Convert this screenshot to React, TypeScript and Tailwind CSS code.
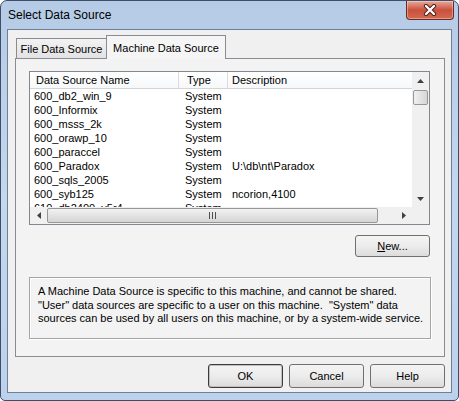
import React from "react";

const rows = [
  { name: "600_db2_win_9", type: "System", desc: "" },
  { name: "600_Informix", type: "System", desc: "" },
  { name: "600_msss_2k", type: "System", desc: "" },
  { name: "600_orawp_10", type: "System", desc: "" },
  { name: "600_paraccel", type: "System", desc: "" },
  { name: "600_Paradox", type: "System", desc: "U:\\db\\nt\\Paradox" },
  { name: "600_sqls_2005", type: "System", desc: "" },
  { name: "600_syb125", type: "System", desc: "ncorion,4100" },
  { name: "610_db2400_v5r4", type: "System", desc: "" },
];

function Arrow({ dir }: { dir: "up" | "down" | "left" | "right" }) {
  const pts = {
    up: "0,4 3.5,0 7,4",
    down: "0,0 3.5,4 7,0",
    left: "4,0 0,3.5 4,7",
    right: "0,0 4,3.5 0,7",
  }[dir];
  const vertical = dir === "up" || dir === "down";
  return (
    <svg width={vertical ? 7 : 4} height={vertical ? 4 : 7} viewBox={vertical ? "0 0 7 4" : "0 0 4 7"}>
      <polygon points={pts} fill="#404040" />
    </svg>
  );
}

function WinButton({ children, primary }: { children: React.ReactNode; primary?: boolean }) {
  return (
    <div
      className={`flex h-full w-[75px] items-center justify-center rounded-[3px] border bg-gradient-to-b from-[#f4f4f4] via-[#ececec] to-[#dcdcdc] text-[11px] text-black ${
        primary ? "border-[#3c3c3c] shadow-[inset_0_0_0_1px_#bfbfbf]" : "border-[#707070]"
      }`}
    >
      {children}
    </div>
  );
}

export default function App() {
  return (
    <div
      className="relative h-[401px] w-[459px] overflow-hidden rounded-t-[7px] rounded-b-[5px] border border-[#3d4e66] bg-gradient-to-b from-[#b5cbe6] via-[#c3d7ee] to-[#bcd2ec]"
      style={{ fontFamily: '"Liberation Sans", Arial, sans-serif' }}
    >
      {/* title bar */}
      <div className="flex h-[28px] items-start justify-between">
        <span className="ml-[7px] mt-[7px] text-[12px] leading-[14px] text-black">Select Data Source</span>
        <div className="mr-[4px] flex h-[19px] w-[48px] items-center justify-center rounded-b-[4px] border border-t-0 border-[#6b2b24] bg-gradient-to-b from-[#e8a899] via-[#c9503d] to-[#d36a4f] shadow-[inset_0_0_0_1px_rgba(255,255,255,0.35)]">
          <svg width="14" height="12" viewBox="0 0 14 12">
            <path d="M3 2 L11 10 M11 2 L3 10" stroke="#4a1b14" strokeWidth="4.2" strokeLinecap="round" />
            <path d="M3 2 L11 10 M11 2 L3 10" stroke="#ffffff" strokeWidth="2.4" strokeLinecap="round" />
          </svg>
        </div>
      </div>

      {/* client area */}
      <div className="mx-[6px] h-[364px] border border-[#6f7f94] bg-[#f0f0f0] pt-[5px] text-[11px] text-black">
        <div className="ml-[7px] w-[430px]">
          {/* tabs */}
          <div className="flex h-[23px] items-end">
            <div className="ml-[1px] flex h-[20px] w-[91px] items-center justify-center border border-b-0 border-[#898c95] bg-gradient-to-b from-[#f2f2f2] to-[#e3e3e3] pt-[2px]">
              File Data Source
            </div>
            <div className="relative z-10 -mb-px -ml-px flex h-[24px] w-[120px] items-start justify-center border border-b-0 border-[#898c95] bg-[#f5f5f5] pt-[4px]">
              Machine Data Source
            </div>
          </div>

          {/* panel */}
          <div className="h-[299px] border border-[#898c95] bg-[#f3f3f3] pl-[13px] pt-[12px]">
            {/* list view */}
            <div className="flex h-[154px] w-[401px] flex-col border border-[#828790] bg-white">
              <div className="flex h-[135px]">
                <div className="flex w-[382px] flex-col overflow-hidden">
                  <div className="flex h-[17px] shrink-0 items-center border-b border-[#d5d5d5] bg-gradient-to-b from-white to-[#f7f8fa] leading-[16px]">
                    <div className="h-full w-[149px] border-r border-[#dcdcdc] pl-[6px]">Data Source Name</div>
                    <div className="h-full w-[49px] border-r border-[#dcdcdc] pl-[8px]">Type</div>
                    <div className="h-full flex-1 pl-[4px]">Description</div>
                  </div>
                  <div className="flex flex-col">
                    {rows.map((r) => (
                      <div key={r.name} className="flex h-[14px] shrink-0 leading-[14px]">
                        <div className="w-[149px] pl-[4px]">{r.name}</div>
                        <div className="w-[49px] pl-[6px]">{r.type}</div>
                        <div className="flex-1 pl-[4px]">{r.desc}</div>
                      </div>
                    ))}
                  </div>
                </div>
                {/* vertical scrollbar */}
                <div className="flex w-[17px] flex-col items-center bg-[#f0f0f0]">
                  <div className="flex h-[17px] items-center justify-center">
                    <Arrow dir="up" />
                  </div>
                  <div className="mt-px h-[15px] w-[15px] rounded-[2px] border border-[#979797] bg-gradient-to-r from-[#f0f0f0] to-[#d6d6d6]" />
                  <div className="flex-1" />
                  <div className="flex h-[17px] items-center justify-center">
                    <Arrow dir="down" />
                  </div>
                </div>
              </div>
              {/* horizontal scrollbar */}
              <div className="flex h-[17px] bg-[#f0f0f0]">
                <div className="flex w-[17px] items-center justify-center">
                  <Arrow dir="left" />
                </div>
                <div className="my-px flex w-[331px] items-center justify-center rounded-[2px] border border-[#979797] bg-gradient-to-b from-[#f2f2f2] to-[#d5d5d5]">
                  <svg width="7" height="7" viewBox="0 0 7 7">
                    <path d="M0.5 0 V7 M3.5 0 V7 M6.5 0 V7" stroke="#505050" strokeWidth="1" />
                  </svg>
                </div>
                <div className="flex-1" />
                <div className="flex w-[17px] items-center justify-center">
                  <Arrow dir="right" />
                </div>
                <div className="w-[17px] bg-[#f0f0f0]" />
              </div>
            </div>

            {/* New button */}
            <div className="mt-[10px] flex h-[22px] w-[401px] justify-end">
              <WinButton>
                <span>
                  <span className="underline">N</span>ew...
                </span>
              </WinButton>
            </div>

            {/* description */}
            <div className="mt-[20px] h-[62px] w-[402px] border border-[#a5a5a5] pl-[8px] pt-[7px] leading-[13.5px] shadow-[inset_1px_1px_0_#ffffff,1px_1px_0_#ffffff]">
              <p>A Machine Data Source is specific to this machine, and cannot be shared.</p>
              <p>"User" data sources are specific to a user on this machine.&nbsp; "System" data</p>
              <p>sources can be used by all users on this machine, or by a system-wide service.</p>
            </div>
          </div>

          {/* dialog buttons */}
          <div className="mt-[7px] flex h-[24px] justify-end gap-[6px]">
            <WinButton primary>OK</WinButton>
            <WinButton>Cancel</WinButton>
            <WinButton>Help</WinButton>
          </div>
        </div>
      </div>
    </div>
  );
}
